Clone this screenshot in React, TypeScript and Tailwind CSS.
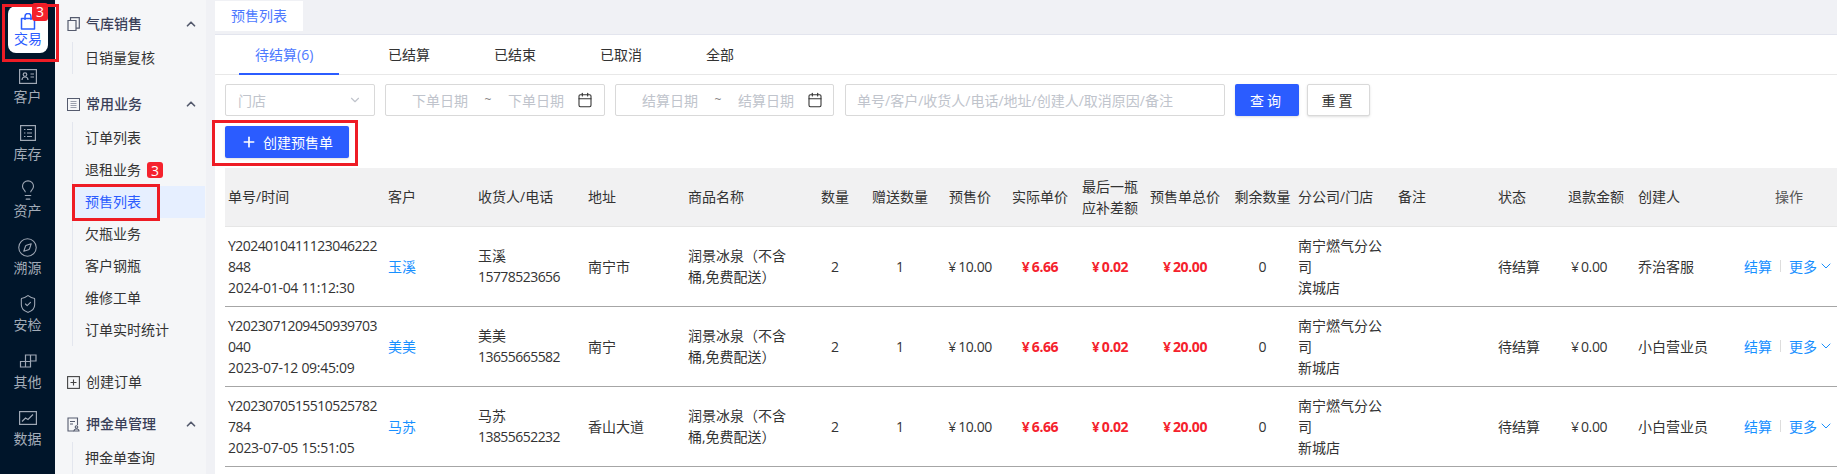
import { ReactNode } from 'react';
import { Calendar, ChevronDown, ChevronUp, Compass, Lightbulb, Plus, ShieldCheck } from 'lucide-react';

const IconBag = () => (
  <svg width="16" height="17" viewBox="0 0 16 17" fill="none" stroke="#2b5cff" strokeWidth="1.5">
    <path d="M1.5 5.500h13v10.500h-13z" strokeLinejoin="round" />
    <path d="M5 7V3.500a3 3 0 0 1 6 0V7" />
  </svg>
);
const IconCard = () => (
  <svg width="18" height="15" viewBox="0 0 18 15" fill="none" stroke="#9fa8b5" strokeWidth="1.2">
    <rect x="0.6" y="0.6" width="16.8" height="13.8" />
    <circle cx="6" cy="5.6" r="1.8" />
    <path d="M3 11c0-2 1.4-3 3-3s3 1 3 3M11.5 5h3.5M11.5 8h3.5" />
  </svg>
);
const IconList = () => (
  <svg width="16" height="16" viewBox="0 0 16 16" fill="none" stroke="#9fa8b5" strokeWidth="1.2">
    <rect x="0.6" y="0.6" width="14.8" height="14.8" />
    <path d="M4 4.5h1.4M7 4.5h5M4 8h1.4M7 8h5M4 11.5h1.4M7 11.5h5" />
  </svg>
);
const IconBlocks = () => (
  <svg width="18" height="14" viewBox="0 0 18 14" fill="none" stroke="#9fa8b5" strokeWidth="1.2">
    <path d="M6.5 7.5h5v5.5h-10v-5.5h5zM6.5 7.5v5.5M6.5 7.5V1h10.500v6H11.500v-6M11.500 7.500v5.500" />
  </svg>
);
const IconChart = () => (
  <svg width="18" height="14" viewBox="0 0 18 14" fill="none" stroke="#9fa8b5" strokeWidth="1.2">
    <rect x="0.6" y="0.6" width="16.8" height="12.8" />
    <path d="M3 10.500l3.500-3.500 2.500 1.500 5-5" />
  </svg>
);
const IconCopy = () => (
  <svg width="13" height="14" viewBox="0 0 13 14" fill="none" stroke="#555b6e" strokeWidth="1.200">
    <path d="M1 3.500h8v10H1zM3.500 3.500V.7h8.800v10.500H9" />
  </svg>
);
const IconDoc = () => (
  <svg width="13" height="13" viewBox="0 0 13 13" fill="none" stroke="#555b6e" strokeWidth="1">
    <rect x="0.500" y="0.500" width="12" height="12" />
    <path d="M3.500 3.500h6M3.500 5.500h6M3.500 7.500h6M3.500 9.500h6" stroke="#9a9fac" />
  </svg>
);
const IconAddBox = () => (
  <svg width="13" height="13" viewBox="0 0 13 13" fill="none" stroke="#444" strokeWidth="1.100">
    <rect x="0.600" y="0.600" width="11.800" height="11.800" />
    <path d="M6.500 3.500v6M3.500 6.500h6" />
  </svg>
);
const IconDeposit = () => (
  <svg width="13" height="15" viewBox="0 0 13 15" fill="none" stroke="#555b6e" strokeWidth="1.100">
    <path d="M7 14H1V1h9.500v7M3 4.500h5M3 7h3" />
    <circle cx="9.500" cy="10" r="1.300" />
    <path d="M7 14c0-1.500 1-2 2.500-2s2.500.5 2.500 2z" />
  </svg>
);

const railItems: { label: string; icon: ReactNode }[] = [
  { label: '客户', icon: <IconCard /> },
  { label: '库存', icon: <IconList /> },
  { label: '资产', icon: <Lightbulb size={22} strokeWidth={1.2} className="text-[#9fa8b5]" /> },
  { label: '溯源', icon: <Compass size={21} strokeWidth={1.2} className="text-[#9fa8b5]" /> },
  { label: '安检', icon: <ShieldCheck size={20} strokeWidth={1.3} className="text-[#9fa8b5]" /> },
  { label: '其他', icon: <IconBlocks /> },
  { label: '数据', icon: <IconChart /> },
];

function Rail() {
  return (
    <div className="w-[55px] shrink-0 bg-[#00152a] pt-[6px]">
      <div className="relative mx-[8px] flex h-[47px] w-[40px] flex-col items-center rounded-[8px] bg-white pt-[7px] text-[14px] leading-[20px] text-[#2b5cff]">
        <IconBag />
        <span className="-mt-px">交易</span>
        <span className="absolute -top-[3px] right-[0px] flex h-[18px] w-[16px] items-center justify-center rounded-[3px] bg-[#f5222d] text-[14px] text-white">3</span>
      </div>
      <div className="mt-[4px]">
        {railItems.map((item) => (
          <div key={item.label} className="flex h-[57px] flex-col items-center pt-[10px] text-[14px] leading-[20px] text-[#a3acb8]">
            <div className="flex h-[18px] items-center justify-center">{item.icon}</div>
            <span className="mt-[2px]">{item.label}</span>
          </div>
        ))}
      </div>
    </div>
  );
}

function MenuHead({ icon, label, open = true, bold = true }: { icon: ReactNode; label: string; open?: boolean; bold?: boolean }) {
  return (
    <div className="flex h-[32px] items-center justify-between pl-[12px] pr-[8px]">
      <div className="flex items-center">
        <div className="flex w-[13px] justify-center">{icon}</div>
        <span className={`ml-[6px] pb-[2px] text-[14px] ${bold ? 'font-medium text-[#3a3f58]' : 'text-[#333]'}`}>{label}</span>
      </div>
      {open && <ChevronUp size={14} strokeWidth={3} className="text-[#555b6e]" />}
    </div>
  );
}

function MenuList({ items }: { items: string[] }) {
  return (
    <div className="ml-[17px] mt-[2px] border-l border-[#e3e6ee]">
      {items.map((name) => (
        <div
          key={name}
          className={`ml-px mr-px flex h-[32px] items-center pl-[11px] text-[14px] ${
            name === '预售列表' ? 'bg-[#e6efff] text-[#2b5cff]' : 'text-[#333]'
          }`}
        >
          <span className="pb-[1px]">{name}</span>
          {name === '退租业务' && (
            <span className="ml-[6px] flex h-[16px] w-[16px] items-center justify-center rounded-[3px] bg-[#f5222d] text-[14px] text-white">3</span>
          )}
        </div>
      ))}
    </div>
  );
}

function Menu() {
  return (
    <div className="w-[151px] shrink-0 overflow-hidden bg-[#f5f6f8] pt-[8px]">
      <MenuHead icon={<IconCopy />} label="气库销售" />
      <MenuList items={['日销量复核']} />
      <div className="mt-[14px]">
        <MenuHead icon={<IconDoc />} label="常用业务" />
        <MenuList items={['订单列表', '退租业务', '预售列表', '欠瓶业务', '客户钢瓶', '维修工单', '订单实时统计']} />
      </div>
      <div className="mt-[20px]">
        <MenuHead icon={<IconAddBox />} label="创建订单" open={false} bold={false} />
      </div>
      <div className="mt-[10px]">
        <MenuHead icon={<IconDeposit />} label="押金单管理" />
        <MenuList items={['押金单查询']} />
      </div>
    </div>
  );
}

function DateRange({ label, className }: { label: string; className: string }) {
  return (
    <div className={`flex h-[32px] items-center rounded-[2px] border border-[#d9d9d9] pl-[26px] text-[14px] text-[#c0c4cc] ${className}`}>
      <span>{label}</span>
      <span className="w-[40px] text-center text-[12px] text-[#888]">~</span>
      <span>{label}</span>
      <Calendar size={16} strokeWidth={1.6} className="ml-[13px] text-[#333]" />
    </div>
  );
}

const columns = [
  { w: 'w-[160px]', title: '单号/时间' },
  { w: 'w-[90px]', title: '客户' },
  { w: 'w-[110px]', title: '收货人/电话' },
  { w: 'w-[100px]', title: '地址' },
  { w: 'w-[125px]', title: '商品名称' },
  { w: 'w-[50px]', title: '数量', center: true },
  { w: 'w-[80px]', title: '赠送数量', center: true },
  { w: 'w-[60px]', title: '预售价', center: true },
  { w: 'w-[80px]', title: '实际单价', center: true },
  { w: 'w-[60px]', title: '最后一瓶 应补差额', center: true },
  { w: 'w-[90px]', title: '预售单总价', center: true },
  { w: 'w-[65px]', title: '剩余数量', center: true },
  { w: 'w-[100px]', title: '分公司/门店' },
  { w: 'w-[100px]', title: '备注' },
  { w: 'w-[70px]', title: '状态' },
  { w: 'w-[70px]', title: '退款金额' },
  { w: 'w-[100px]', title: '创建人' },
  { w: 'w-[102px]', title: '操作', center: true },
];

const rows = [
  { no: 'Y2024010411123046222848', time: '2024-01-04 11:12:30', customer: '玉溪', phone: '15778523656', addr: '南宁市', shop: '滨城店', creator: '乔治客服' },
  { no: 'Y2023071209450939703040', time: '2023-07-12 09:45:09', customer: '美美', phone: '13655665582', addr: '南宁', shop: '新城店', creator: '小白营业员' },
  { no: 'Y2023070515510525782784', time: '2023-07-05 15:51:05', customer: '马苏', phone: '13855652232', addr: '香山大道', shop: '新城店', creator: '小白营业员' },
];

function Money({ value, red }: { value: string; red?: boolean }) {
  return (
    <span className={red ? 'font-bold text-[#f5222d]' : ''}>
      <span className="mr-[2px]">¥</span>
      <span className="tracking-[-0.4px]">{value}</span>
    </span>
  );
}

function Table() {
  return (
    <table className="mt-[10px] ml-[10px] w-[1612px] table-fixed text-[14px] leading-[21px] text-[#333]">
      <colgroup>
        {columns.map((c) => (
          <col key={c.title} className={c.w} />
        ))}
      </colgroup>
      <thead>
        <tr className="h-[58px] border-b border-[#e6e6e6] bg-[#f1f1f2]">
          {columns.map((c) => (
            <th
              key={c.title}
              className={`font-normal ${c.center ? 'text-center' : 'text-left pl-[3px]'} ${c.title === '退款金额' ? 'whitespace-nowrap' : ''} ${c.title === '操作' ? 'pl-[6px] text-[#555]' : ''}`}
            >
              {c.title}
            </th>
          ))}
        </tr>
      </thead>
      <tbody>
        {rows.map((r) => (
          <tr key={r.no} className="h-[80px] border-b border-[#a6a6a6]">
            <td className="break-all pl-[3px] pr-[5px]">
              <span className="tracking-[-0.55px]">{r.no}</span>
              <br />
              <span className="tracking-[-0.3px]">{r.time}</span>
            </td>
            <td className="pl-[3px] text-[#1890ff]">{r.customer}</td>
            <td className="pl-[3px]">
              {r.customer}
              <br />
              <span className="tracking-[-0.55px]">{r.phone}</span>
            </td>
            <td className="pl-[3px]">{r.addr}</td>
            <td className="pl-[3px] pr-[15px]">润景冰泉（不含桶,免费配送）</td>
            <td className="text-center">2</td>
            <td className="text-center">1</td>
            <td className="text-center"><Money value="10.00" /></td>
            <td className="text-center"><Money value="6.66" red /></td>
            <td className="text-center"><Money value="0.02" red /></td>
            <td className="text-center"><Money value="20.00" red /></td>
            <td className="text-center">0</td>
            <td className="pl-[3px] pr-[10px]">
              南宁燃气分公司
              <br />
              {r.shop}
            </td>
            <td />
            <td className="pl-[3px]">待结算</td>
            <td className="pl-[6px]"><Money value="0.00" /></td>
            <td className="pl-[3px]">{r.creator}</td>
            <td className="pl-[9px] text-[#1890ff]">
              <div className="flex items-center whitespace-nowrap">
                <span>结算</span>
                <span className="mx-[8px] h-[12px] w-px bg-[#ddd]" />
                <span>更多</span>
                <ChevronDown size={16} strokeWidth={1.5} className="ml-px" />
              </div>
            </td>
          </tr>
        ))}
      </tbody>
    </table>
  );
}

export default function App() {
  return (
    <div className="relative flex h-[474px] w-[1837px] overflow-hidden bg-[#f0f1f5] font-['Open_Sans','Noto_Sans_CJK_SC',sans-serif]">
      <Rail />
      <Menu />

      <div className="min-w-0 flex-1 pl-[9px]">
        <div className="h-[34px] pt-[1px]">
          <div className="flex h-[30px] w-[88px] items-center justify-center bg-white pb-[2px] text-[14px] text-[#4d79ff]">预售列表</div>
        </div>
        <div className="h-[440px] border-t border-[#e3e5ee] bg-white">
          {/* Status tabs */}
          <div className="flex h-[40px] border-b border-[#e8e8e8] pl-[24px] text-[14px] text-[#333]">
            <div className="h-[40px] w-[100px] border-b-2 border-[#2b5cff] pl-[16px] leading-[40px] text-[#4d79ff]">待结算(6)</div>
            <div className="ml-[49px] flex leading-[40px]">
              {['已结算', '已结束', '已取消', '全部'].map((t) => (
                <div key={t} className="w-[106px]">{t}</div>
              ))}
            </div>
          </div>

          {/* Filters */}
          <div className="flex pl-[10px] pt-[9px]">
            <div className="flex h-[32px] w-[150px] items-center justify-between rounded-[2px] border border-[#d9d9d9] pl-[12px] pr-[12px] text-[14px] text-[#c0c4cc]">
              <span>门店</span>
              <ChevronDown size={14} />
            </div>
            <DateRange label="下单日期" className="ml-[10px] w-[220px]" />
            <DateRange label="结算日期" className="ml-[10px] w-[219px]" />
            <div className="ml-[11px] flex h-[32px] w-[380px] items-center rounded-[2px] border border-[#d9d9d9] pl-[11px] text-[14px] text-[#c0c4cc]">
              单号/客户/收货人/电话/地址/创建人/取消原因/备注
            </div>
            <button className="ml-[10px] h-[32px] w-[64px] rounded-[2px] bg-[#2b5cff] text-[14px] tracking-[3px] text-white shadow-sm">查询</button>
            <button className="ml-[8px] h-[32px] w-[63px] rounded-[2px] border border-[#d9d9d9] bg-white text-[14px] tracking-[3px] text-[#333] shadow-sm">重置</button>
          </div>

          {/* Create */}
          <div className="pl-[10px] pt-[10px]">
            <button className="flex h-[32px] w-[124px] items-center rounded-[2px] bg-[#2b5cff] pl-[16px] text-[14px] text-white shadow-sm">
              <Plus size={16} strokeWidth={2.5} />
              <span className="ml-[6px]">创建预售单</span>
            </button>
          </div>

          <Table />
        </div>
      </div>

      {/* Red markup boxes over the screenshot */}
      <div className="absolute left-[2px] top-[4px] h-[58px] w-[57px] border-[3px] border-[#ee1c25]" />
      <div className="absolute left-[72px] top-[184px] h-[37px] w-[88px] border-[3px] border-[#ee1c25]" />
      <div className="absolute left-[212px] top-[120px] h-[46px] w-[146px] border-[3px] border-[#ee1c25]" />
    </div>
  );
}
